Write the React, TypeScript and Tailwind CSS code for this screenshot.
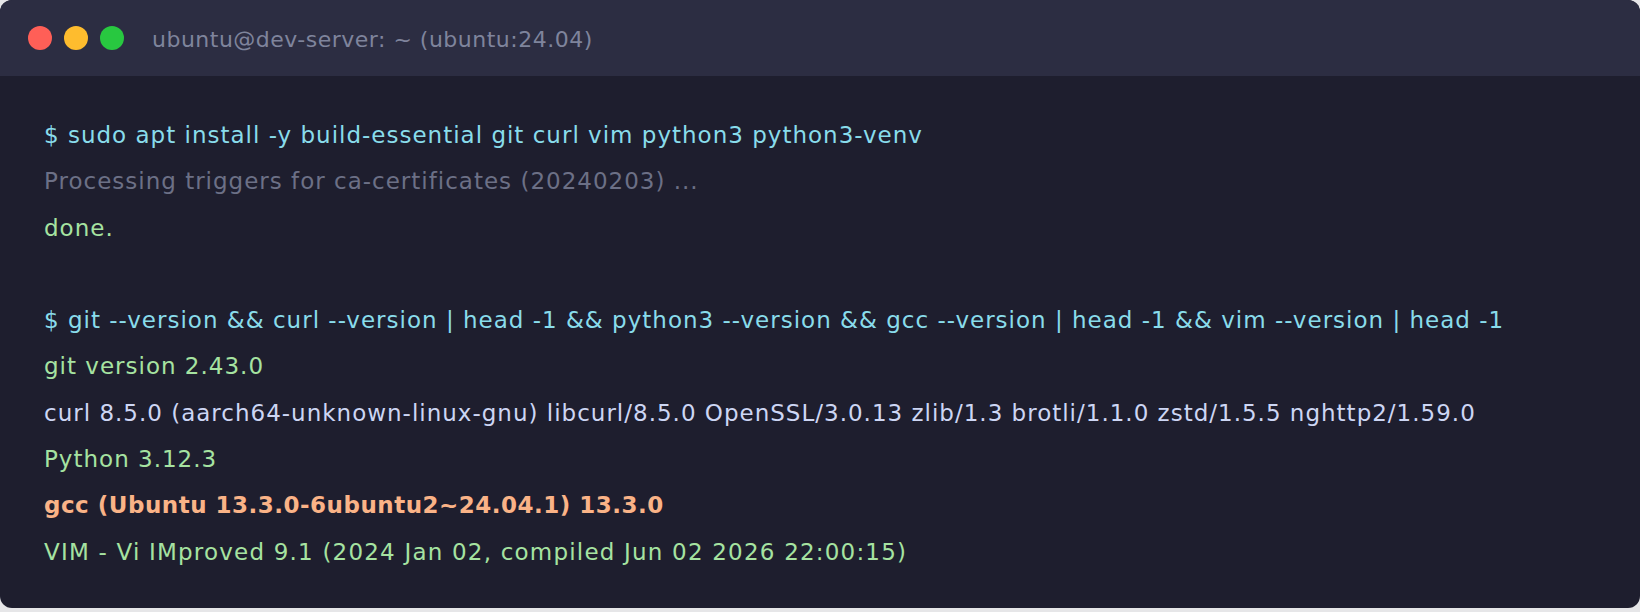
import React from "react";

type Line = { text: string; cls: string };

const lines: Line[] = [
  { text: "$ sudo apt install -y build-essential git curl vim python3 python3-venv", cls: "text-[#89dceb]" },
  { text: "Processing triggers for ca-certificates (20240203) ...", cls: "text-[#6c7086]" },
  { text: "done.", cls: "text-[#a6e3a1]" },
  { text: "", cls: "" },
  { text: "$ git --version && curl --version | head -1 && python3 --version && gcc --version | head -1 && vim --version | head -1", cls: "text-[#89dceb]" },
  { text: "git version 2.43.0", cls: "text-[#a6e3a1]" },
  { text: "curl 8.5.0 (aarch64-unknown-linux-gnu) libcurl/8.5.0 OpenSSL/3.0.13 zlib/1.3 brotli/1.1.0 zstd/1.5.5 nghttp2/1.59.0", cls: "text-[#cdd6f4]" },
  { text: "Python 3.12.3", cls: "text-[#a6e3a1]" },
  { text: "gcc (Ubuntu 13.3.0-6ubuntu2~24.04.1) 13.3.0", cls: "text-[#fab387] font-semibold tracking-[0.5px]" },
  { text: "VIM - Vi IMproved 9.1 (2024 Jan 02, compiled Jun 02 2026 22:00:15)", cls: "text-[#a6e3a1] tracking-[1.2px]" },
];

export default function App() {
  return (
    <div className="w-[1640px] h-[612px] bg-[#e6e6e8]" style={{ fontFamily: '"DejaVu Sans", sans-serif' }}>
      <div className="h-[608px] rounded-[12px] overflow-hidden bg-[#1e1e2e] flex flex-col">
        <div className="h-[76px] bg-[#2c2d42] flex items-center pl-[28px] shrink-0">
          <div className="flex gap-[12px]">
            <span className="w-[24px] h-[24px] rounded-full bg-[#ff5f57]" />
            <span className="w-[24px] h-[24px] rounded-full bg-[#febc2e]" />
            <span className="w-[24px] h-[24px] rounded-full bg-[#28c840]" />
          </div>
          <div className="ml-[28px] mt-[3px] text-[22px] tracking-[0.5px] text-[#7f849c]">ubuntu@dev-server: ~ (ubuntu:24.04)</div>
        </div>
        <div className="flex-1 pl-[44px] pt-[36px] text-[23px] tracking-[1px] leading-[46.3px]">
          {lines.map((l, i) => (
            <div key={i} className={`h-[46.3px] whitespace-pre ${l.cls}`}>{l.text}</div>
          ))}
        </div>
      </div>
    </div>
  );
}
